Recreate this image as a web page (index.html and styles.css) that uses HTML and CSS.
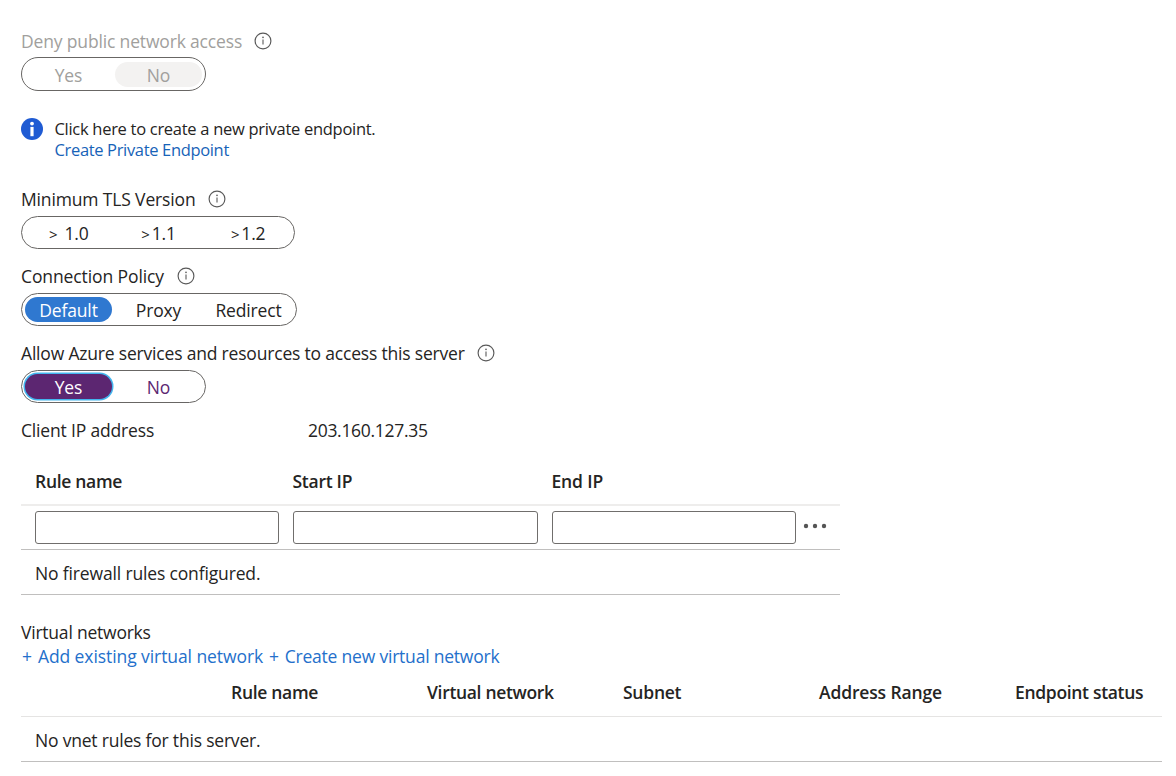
FILE: index.html
```html
<!DOCTYPE html>
<html lang="en">
<head>
<meta charset="utf-8">
<title>Firewalls and virtual networks</title>
<link rel="stylesheet" href="styles.css">
</head>
<body>
<svg class="defs" width="0" height="0" aria-hidden="true">
  <symbol id="info" viewBox="0 0 18 18">
    <circle cx="9" cy="9" r="7.9" fill="none" stroke="#595959" stroke-width="1.15"/>
    <path d="M9 7.5v5.1" stroke="#595959" stroke-width="1.1"/>
    <circle cx="9" cy="5.4" r=".8" fill="#595959"/>
  </symbol>
</svg>
<main class="page">
  <section class="field deny">
    <div class="label muted"><span class="t-deny">Deny public network access</span><svg class="info"><use href="#info"/></svg></div>
    <div class="toggle disabled"><span class="option">Yes</span><span class="option selected">No</span></div>
  </section>

  <section class="notice">
    <svg class="notice-icon" viewBox="0 0 22 22">
      <circle cx="11" cy="11" r="11" fill="#1f5bd3"/>
      <circle cx="11" cy="5.6" r="1.9" fill="#fff"/>
      <path d="M9.4 8.9h3.2v9.3H9.4z" fill="#fff"/>
    </svg>
    <div class="notice-text">
      <div><span class="t-click">Click here to create a new private endpoint.</span></div>
      <div><a class="link dark t-cpe">Create Private Endpoint</a></div>
    </div>
  </section>

  <section class="field">
    <div class="label"><span class="t-tls">Minimum TLS Version</span><svg class="info wide"><use href="#info"/></svg></div>
    <div class="toggle versions"><span class="option"><span class="gt loose">&gt;</span> 1.0</span><span class="option"><span class="gt tight">&gt;</span>1.1</span><span class="option"><span class="gt tight">&gt;</span>1.2</span></div>
  </section>

  <section class="field">
    <div class="label"><span class="t-policy">Connection Policy</span><svg class="info wide"><use href="#info"/></svg></div>
    <div class="toggle policy"><span class="option selected">Default</span><span class="option">Proxy</span><span class="option">Redirect</span></div>
  </section>

  <section class="field">
    <div class="label"><span class="t-allow">Allow Azure services and resources to access this server</span><svg class="info"><use href="#info"/></svg></div>
    <div class="toggle edited"><span class="option selected">Yes</span><span class="option">No</span></div>
  </section>

  <section class="client"><span><span class="t-client">Client IP address</span></span><span><span class="t-ip">203.160.127.35</span></span></section>

  <section class="rules">
    <div class="rules-row rules-head"><span><span class="t-rule">Rule name</span></span><span><span class="t-start">Start IP</span></span><span><span class="t-end">End IP</span></span></div>
    <div class="rules-row rules-form">
      <input class="box" aria-label="Rule name"><input class="box" aria-label="Start IP"><input class="box" aria-label="End IP">
      <svg class="more" viewBox="0 0 24 6"><g fill="#555"><circle cx="3" cy="3" r="2.2"/><circle cx="12" cy="3" r="2.2"/><circle cx="21" cy="3" r="2.2"/></g></svg>
    </div>
    <div class="empty"><span class="t-nofw">No firewall rules configured.</span></div>
  </section>

  <section class="vnets">
    <div class="title"><span class="t-vn">Virtual networks</span></div>
    <div class="actions"><a class="link t-add"><span class="plus">+</span> Add existing virtual network</a><a class="link t-create"><span class="plus">+</span> Create new virtual network</a></div>
    <div class="vnet-head"><span><span class="t-rule">Rule name</span></span><span><span class="t-vnet">Virtual network</span></span><span><span class="t-subnet">Subnet</span></span><span><span class="t-range">Address Range</span></span><span><span class="t-status">Endpoint status</span></span></div>
    <div class="empty vnet-empty"><span class="t-novnet">No vnet rules for this server.</span></div>
  </section>
</main>
</body>
</html>
```
FILE: styles.css
```css
* { box-sizing: border-box; }
body { margin: 0; background: #fff; color: #252423; font: 17.5px/22px "Open Sans", "Noto Sans", sans-serif; letter-spacing: -0.15px; white-space: nowrap; }
.defs { position: absolute; }
.page { padding: 30px 14px 0 21px; }
.field { margin-bottom: 16px; }
.label { display: flex; align-items: center; height: 22px; margin-bottom: 6px; }
.muted { color: #a19f9d; }
.info { width: 18px; height: 18px; margin-left: 12px; }
.wide { margin-left: 13px; }
.toggle { display: flex; align-items: center; gap: 3px; width: 185px; height: 33px; padding: 0 3px; border: 1px solid #686664; border-radius: 17px; }
.option { width: 87px; height: 25px; border-radius: 13px; text-align: center; line-height: 27px; }
.versions { width: 274px; }
.versions .option { padding-left: 1px; }
.policy { width: 276px; }
.gt { font-size: 15px; }
.tight { margin-right: 2px; }
.loose { margin-right: 2.5px; }
.policy .selected { background: #2f78d0; color: #fff; }
.disabled { color: #a19f9d; }
.disabled .selected { background: #f3f2f1; }
.edited { color: #5c2671; }
.edited .selected { background: #5c2671; color: #fff; box-shadow: 0 0 0 1.5px #43b5ee; }
.deny .label { margin-bottom: 5px; }
.deny .toggle { height: 34px; }
.deny { margin-bottom: 27px; }
.notice { display: flex; gap: 11.5px; height: 42px; margin-bottom: 28px; font-size: 16.5px; line-height: 21px; }
.notice-icon { width: 22px; height: 22px; }
.notice-text { margin-top: -0.5px; }
.link { color: #2470cb; }
.dark { color: #1763b8; }
.client { display: grid; grid-template-columns: 287px auto; height: 22px; margin-top: 17px; line-height: 21px; }
.rules { width: 819px; margin-top: 16px; }
.rules-row { display: grid; grid-template-columns: 243.5px 245px 244px 24px; column-gap: 14px; padding-left: 14px; align-items: center; }
.rules-head { height: 48px; border-bottom: 2px solid #eeedec; font-weight: 600; }
.rules-form { height: 44px; border-bottom: 1px solid #c0bfbe; }
.box { width: 100%; height: 33px; padding: 0 8px; border: 1px solid #706e6c; border-radius: 3px; background: #fff; font: inherit; }
.more { width: 24px; height: 6px; margin-left: -6.5px; margin-top: -3px; }
.empty { display: flex; align-items: center; height: 45px; padding-left: 14px; padding-top: 2px; border-bottom: 1px solid #c0bfbe; }
.vnets { margin-top: 26px; width: 1141px; }
.title { height: 23px; line-height: 22px; }
.actions { display: flex; gap: 6px; height: 24px; padding-left: 1px; line-height: 24px; }
.plus { margin-right: 1.5px; }
.vnet-head { display: grid; grid-template-columns: repeat(5, 196px); width: 1141px; height: 49px; padding-left: 210px; align-items: center; border-bottom: 1px solid #e5e4e3; font-weight: 600; }
.vnet-empty { padding-top: 1px; }

/* tracking per string */
.t-deny { letter-spacing: -0.16px; }
.t-allow { letter-spacing: -0.19px; }
.t-policy { letter-spacing: -0.1px; }
.t-click { letter-spacing: -0.29px; }
.t-cpe { letter-spacing: -0.34px; }
.t-client { letter-spacing: -0.17px; }
.t-ip { letter-spacing: -0.3px; }
.t-rule { letter-spacing: -0.3px; }
.t-start { letter-spacing: -0.27px; }
.t-vn { letter-spacing: -0.22px; }
.t-add { letter-spacing: -0.08px; }
.t-create { letter-spacing: -0.21px; }
.t-vnet, .t-status { letter-spacing: -0.32px; }
.t-subnet { letter-spacing: -0.25px; }
.t-novnet { letter-spacing: -0.2px; }
```
